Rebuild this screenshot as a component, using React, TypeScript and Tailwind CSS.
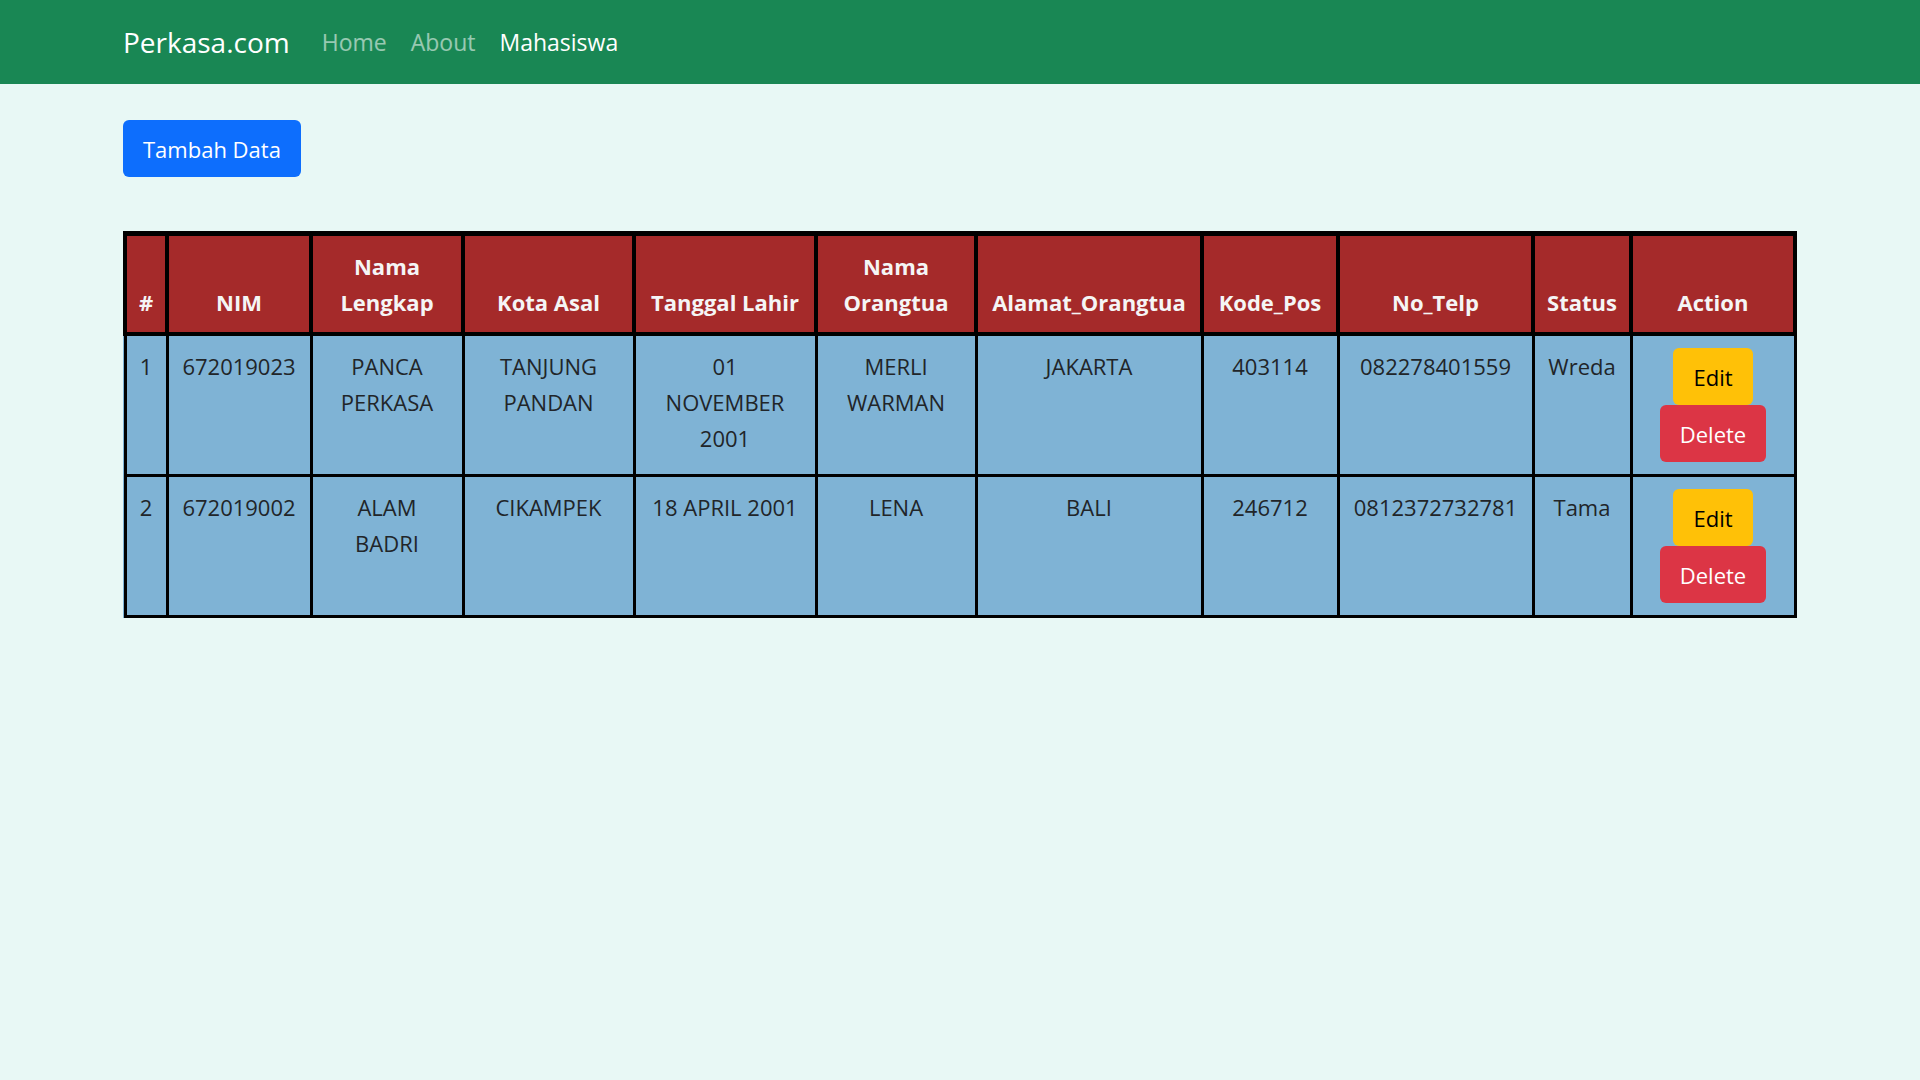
type Student = {
  nim: string;
  name: string;
  city: string;
  birthDate: string;
  parent: string;
  address: string;
  postalCode: string;
  phone: string;
  status: string;
};

const columns = [
  { label: "#", width: "w-[42px]" },
  { label: "NIM", width: "w-[144px]" },
  { label: "Nama Lengkap", width: "w-[152px]" },
  { label: "Kota Asal", width: "w-[171px]" },
  { label: "Tanggal Lahir", width: "w-[182px]" },
  { label: "Nama Orangtua", width: "w-[160px]" },
  { label: "Alamat_Orangtua", width: "w-[226px]" },
  { label: "Kode_Pos", width: "w-[136px]" },
  { label: "No_Telp", width: "w-[195px]" },
  { label: "Status", width: "w-[98px]" },
  { label: "Action", width: "w-[164px]" },
];

const students: Student[] = [
  {
    nim: "672019023",
    name: "PANCA\nPERKASA",
    city: "TANJUNG\nPANDAN",
    birthDate: "01\nNOVEMBER\n2001",
    parent: "MERLI\nWARMAN",
    address: "JAKARTA",
    postalCode: "403114",
    phone: "082278401559",
    status: "Wreda",
  },
  {
    nim: "672019002",
    name: "ALAM\nBADRI",
    city: "CIKAMPEK",
    birthDate: "18 APRIL 2001",
    parent: "LENA",
    address: "BALI",
    postalCode: "246712",
    phone: "0812372732781",
    status: "Tama",
  },
];

function Navbar() {
  return (
    <nav className="bg-[#198754] py-3">
      <div className="mx-auto flex w-full max-w-[1710px] items-center px-[18px] text-[23px]">
        <a href="#" className="mr-5 py-2 text-[28px] leading-11 text-white">
          Perkasa.com
        </a>
        <a href="#home" className="px-3 py-3 text-white/55">
          Home
        </a>
        <a href="#about" className="px-3 py-3 text-white/55">
          About
        </a>
        <a href="#mahasiswa" aria-current="page" className="px-3 py-3 text-white">
          Mahasiswa
        </a>
      </div>
    </nav>
  );
}

function Row({ number, student }: { number: number; student: Student }) {
  const values = [
    number,
    student.nim,
    student.name,
    student.city,
    student.birthDate,
    student.parent,
    student.address,
    student.postalCode,
    student.phone,
    student.status,
  ];
  return (
    <tr>
      {values.map((value, i) => (
        <td key={i} className="border-3 border-black px-2 py-3 align-top whitespace-pre-line">
          {value}
        </td>
      ))}
      <td className="border-3 border-black px-2 py-3 align-top">
        <div className="flex flex-col items-center">
          <button type="button" className="h-[57px] rounded-md bg-[#ffc107] px-5 text-black">
            Edit
          </button>
          <button type="button" className="h-[57px] rounded-md bg-[#dc3545] px-5 text-white">
            Delete
          </button>
        </div>
      </td>
    </tr>
  );
}

export default function App() {
  return (
    <div className="min-h-screen bg-[#e8f8f5] font-['Open_Sans',sans-serif] text-[22px] leading-9 text-[#212529]">
      <Navbar />
      <main className="mx-auto w-full max-w-[1710px] px-[18px] pt-9">
        <button type="button" className="h-[57px] rounded-md bg-[#0d6efd] px-5 text-white">
          Tambah Data
        </button>
        <table className="mt-[54px] w-full table-fixed border-collapse bg-[#7fb3d5] text-center">
          <colgroup>
            {columns.map((column) => (
              <col key={column.label} className={column.width} />
            ))}
          </colgroup>
          <thead className="border-t-5 border-black bg-[#a52a2a] text-[#f5f5f5]">
            <tr>
              {columns.map((column) => (
                <th
                  key={column.label}
                  scope="col"
                  className="border-4 border-black px-2 py-3 align-bottom font-bold"
                >
                  {column.label}
                </th>
              ))}
            </tr>
          </thead>
          <tbody>
            {students.map((student, i) => (
              <Row key={student.nim} number={i + 1} student={student} />
            ))}
          </tbody>
        </table>
      </main>
    </div>
  );
}
